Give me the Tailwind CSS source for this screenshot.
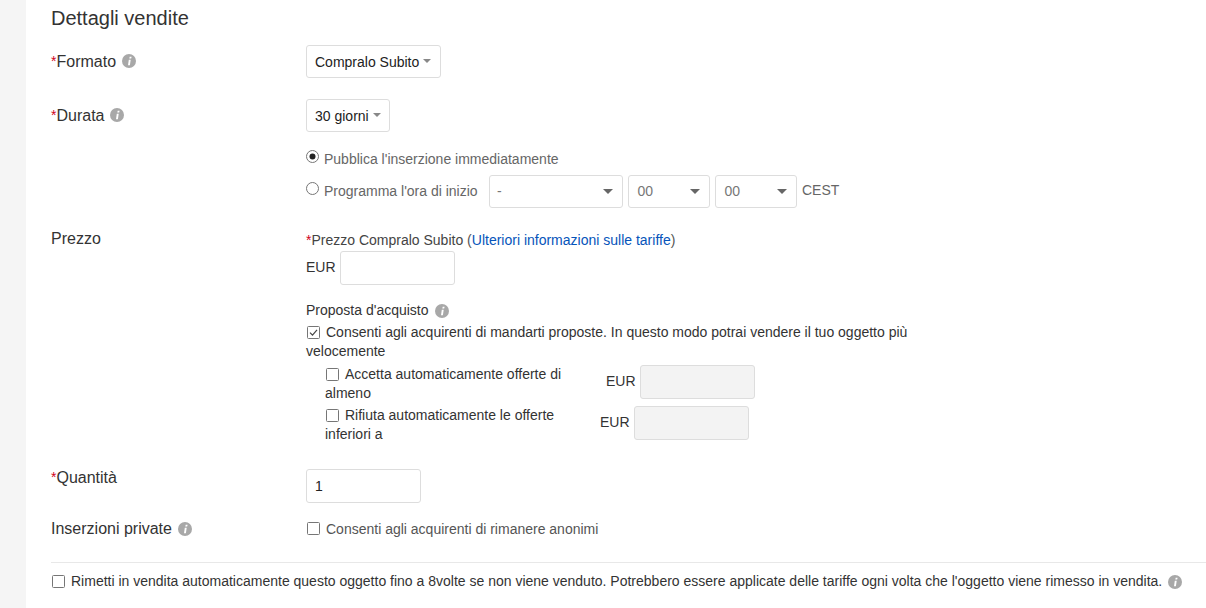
<!DOCTYPE html>
<html lang="it">
<head>
<meta charset="utf-8">
<script src="https://cdn.jsdelivr.net/npm/@tailwindcss/browser@4"></script>
</head>
<body class="bg-white">
<svg class="hidden"><defs>
<symbol id="info" viewBox="0 0 14 14"><circle cx="7" cy="7" r="7" fill="#a8a8a8"/><path d="M7.7 2.8h1.9l-.4 1.8H7.3zM6.8 5.7h1.9L7.9 11.2H6z" fill="#fff"/></symbol>
<symbol id="box" viewBox="0 0 13 13"><rect x=".5" y=".5" width="12" height="12" rx="1" fill="#fff" stroke="#767676"/></symbol>
<symbol id="boxc" viewBox="0 0 13 13"><rect x=".5" y=".5" width="12" height="12" rx="1" fill="#fff" stroke="#767676"/><path d="M3 6.6l2.5 2.6L10 3.8" fill="none" stroke="#444" stroke-width="1.2"/></symbol>
</defs></svg>
<div class="flex h-[608px] w-[1206px] overflow-hidden font-['Liberation_Sans',Arial,sans-serif] text-[14px] leading-[19px] text-[#333]">
  <div class="w-[26px] shrink-0 bg-[#f5f5f5]"></div>
  <div class="flex-1 pl-[25px]">
    <h2 class="h-[45px] pt-[7px] text-[20px] leading-[22px] font-normal text-[#333]">Dettagli vendite</h2>

    <div class="flex h-[33px]">
      <div class="flex w-[255px] items-start gap-[6px] pt-[8px] text-[16px] leading-[18px]"><span><span class="relative top-[-1px] text-[#d0021b] text-[14px]">*</span>Formato</span><svg class="mt-[1px] size-[14px]"><use href="#info"/></svg></div>
      <div class="flex h-[33px] w-[135px] items-center gap-[4px] rounded-[3px] border border-[#ddd] pl-[8px] pt-[1px] text-[#222]">Compralo Subito<span class="mb-[2px] size-0 border-x-[4.5px] border-t-[4.5px] border-x-transparent border-t-[#888]"></span></div>
    </div>

    <div class="mt-[21px] flex h-[33px]">
      <div class="flex w-[255px] items-start gap-[6px] pt-[8px] text-[16px] leading-[18px]"><span><span class="relative top-[-1px] text-[#d0021b] text-[14px]">*</span>Durata</span><svg class="mt-[1px] size-[14px]"><use href="#info"/></svg></div>
      <div class="flex h-[33px] w-[84px] items-center gap-[4px] rounded-[3px] border border-[#ddd] pl-[8px] pt-[1px] text-[#222]">30 giorni<span class="mb-[2px] size-0 border-x-[4.5px] border-t-[4.5px] border-x-transparent border-t-[#888]"></span></div>
    </div>

    <div class="ml-[255px] mt-[18px] flex h-[19px] items-center text-[#666]">
      <svg class="mb-[6px] size-[13px]" viewBox="0 0 13 13"><circle cx="6.5" cy="6.5" r="6" fill="#fff" stroke="#767676"/><circle cx="6.5" cy="6.5" r="3" fill="#222"/></svg>
      <span class="ml-[5px]">Pubblica l'inserzione immediatamente</span>
    </div>

    <div class="ml-[255px] mt-[6px] flex h-[33px] items-center text-[#666]">
      <svg class="mb-[6px] size-[13px]" viewBox="0 0 13 13"><circle cx="6.5" cy="6.5" r="6" fill="#fff" stroke="#767676"/></svg>
      <span class="ml-[5px] w-[165px]">Programma l'ora di inizio</span>
      <div class="flex h-[33px] w-[134px] items-center justify-between rounded-[3px] border border-[#ddd] pl-[7px] pr-[9px] text-[#777]">-<span class="size-0 border-x-[5px] border-t-[5px] border-x-transparent border-t-[#666]"></span></div>
      <div class="ml-[5px] flex h-[33px] w-[82px] items-center justify-between rounded-[3px] border border-[#ddd] pl-[8.5px] pr-[9px] text-[#777]">00<span class="size-0 border-x-[5px] border-t-[5px] border-x-transparent border-t-[#666]"></span></div>
      <div class="ml-[5px] flex h-[33px] w-[82px] items-center justify-between rounded-[3px] border border-[#ddd] pl-[8.5px] pr-[9px] text-[#777]">00<span class="size-0 border-x-[5px] border-t-[5px] border-x-transparent border-t-[#666]"></span></div>
      <span class="ml-[5px] mb-[3px]">CEST</span>
    </div>

    <div class="mt-[21px] flex">
      <div class="w-[255px] pt-[1px] text-[16px] leading-[18px]">Prezzo</div>
      <div class="w-[610px]">
        <div class="h-[22px] pt-[2px] text-[#444]"><span class="text-[#d0021b]">*</span>Prezzo Compralo Subito <span class="text-[#555]">(</span><a class="text-[#0654ba]">Ulteriori informazioni sulle tariffe</a><span class="text-[#555]">)</span></div>
        <div class="flex h-[34px] items-center gap-[4px]"><span class="mb-[2px]">EUR</span><div class="h-[34px] w-[115px] rounded-[3px] border border-[#ddd]"></div></div>
        <div class="mt-[16px] flex h-[19px] items-center gap-[6px]">Proposta d'acquisto<svg class="size-[14px]"><use href="#info"/></svg></div>
        <div class="mt-[3px] w-[610px]"><svg class="ml-px mr-[6px] inline-block size-[13px] align-[-2px]"><use href="#boxc"/></svg>Consenti agli acquirenti di mandarti proposte. In questo modo potrai vendere il tuo oggetto più velocemente</div>
        <div class="mt-[4px] flex h-[34px] pl-[19px]">
          <div class="w-[246px] indent-px"><svg class="mr-[6px] -mt-[1px] inline-block size-[13px] align-[-2px]"><use href="#box"/></svg>Accetta automaticamente offerte di almeno</div>
          <div class="ml-[35px] flex items-center gap-[4px]"><span class="mb-[2px]">EUR</span><div class="h-[34px] w-[115px] rounded-[3px] border border-[#ddd] bg-[#f3f3f3]"></div></div>
        </div>
        <div class="mt-[7px] flex h-[34px] pl-[19px]">
          <div class="w-[240px] indent-px"><svg class="mr-[6px] -mt-[1px] inline-block size-[13px] align-[-2px]"><use href="#box"/></svg>Rifiuta automaticamente le offerte inferiori a</div>
          <div class="ml-[35px] flex items-center gap-[4px]"><span class="mb-[2px]">EUR</span><div class="h-[34px] w-[115px] rounded-[3px] border border-[#ddd] bg-[#f3f3f3]"></div></div>
        </div>
      </div>
    </div>

    <div class="mt-[29px] flex h-[34px]">
      <div class="w-[255px] text-[16px] leading-[18px]"><span class="relative top-[-1px] text-[#d0021b] text-[14px]">*</span>Quantità</div>
      <div class="flex h-[34px] w-[115px] items-center rounded-[3px] border border-[#ddd] pl-[8px] text-[#222]">1</div>
    </div>

    <div class="mt-[16px] flex h-[19px] items-center">
      <div class="flex w-[255px] items-center gap-[6px] text-[16px] leading-[18px]">Inserzioni private<svg class="size-[14px]"><use href="#info"/></svg></div>
      <svg class="ml-px mr-[6px] size-[13px]"><use href="#box"/></svg><span class="relative top-[1px] text-[#555]">Consenti agli acquirenti di rimanere anonimi</span>
    </div>

    <div class="mt-[24px] border-t border-[#e8e8e8] pt-[9px]">
      <div class="flex h-[19px] items-center">
        <svg class="ml-px mr-[6px] size-[13px]"><use href="#box"/></svg><span>Rimetti in vendita automaticamente questo oggetto fino a 8volte se non viene venduto. Potrebbero essere applicate delle tariffe ogni volta che l'oggetto viene rimesso in vendita.</span><svg class="ml-[6px] size-[14px]"><use href="#info"/></svg>
      </div>
    </div>
  </div>
</div>
</body>
</html>
